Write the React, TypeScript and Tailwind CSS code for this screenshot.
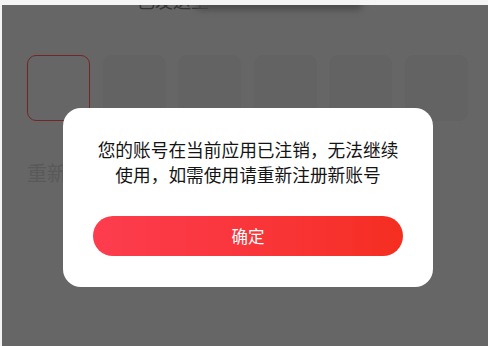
import React from "react";

export default function App() {
  const cjk = { fontFamily: '"Noto Sans CJK SC", "Noto Sans", sans-serif' };
  return (
    <div
      className="relative w-[488px] h-[346px] overflow-hidden bg-[#f4f4f4] pl-[2px] pt-[5px]"
      style={cjk}
    >
      <div className="relative h-full w-full overflow-hidden bg-[#666666]">
        {/* top partial line */}
        <div className="mt-[-15px] ml-[135px] flex items-center h-[20px]">
          <span className="text-[18px] leading-[20px] text-[#333333]">已发送至</span>
          <div className="ml-[-14px] mt-[6px] h-[14px] w-[168px] rounded-full bg-[#4c4c4c] blur-[3px]" />
        </div>

        {/* code boxes */}
        <div className="mt-[45px] ml-[25px] flex gap-[12.6px]">
          <div className="h-[66px] w-[63px] rounded-[9px] border-[1.5px] border-[#742626]" />
          <div className="h-[66px] w-[63px] rounded-[9px] bg-[#636363]" />
          <div className="h-[66px] w-[63px] rounded-[9px] bg-[#636363]" />
          <div className="h-[66px] w-[63px] rounded-[9px] bg-[#636363]" />
          <div className="h-[66px] w-[63px] rounded-[9px] bg-[#636363]" />
          <div className="h-[66px] w-[63px] rounded-[9px] bg-[#636363]" />
        </div>

        <div className="mt-[40px] ml-[25px] text-[20px] leading-[24px] text-[#595959]">
          重新获取
        </div>
      </div>

      {/* dialog */}
      <div className="absolute left-[63px] top-[108px] flex h-[179px] w-[370px] flex-col items-center rounded-[18px] bg-white pt-[29px] px-[30px]">
        <div className="text-center text-[17.7px] leading-[25px] text-[#141414]">
          <div className="whitespace-nowrap">您的账号在当前应用已注销，无法继续</div>
          <div className="whitespace-nowrap">使用，如需使用请重新注册新账号</div>
        </div>
        <button className="mt-[29px] flex h-[40px] w-[310px] items-center justify-center rounded-full bg-gradient-to-r from-[#fd3c4e] to-[#f52e20] text-[16.5px] text-white">
          确定
        </button>
      </div>
    </div>
  );
}
